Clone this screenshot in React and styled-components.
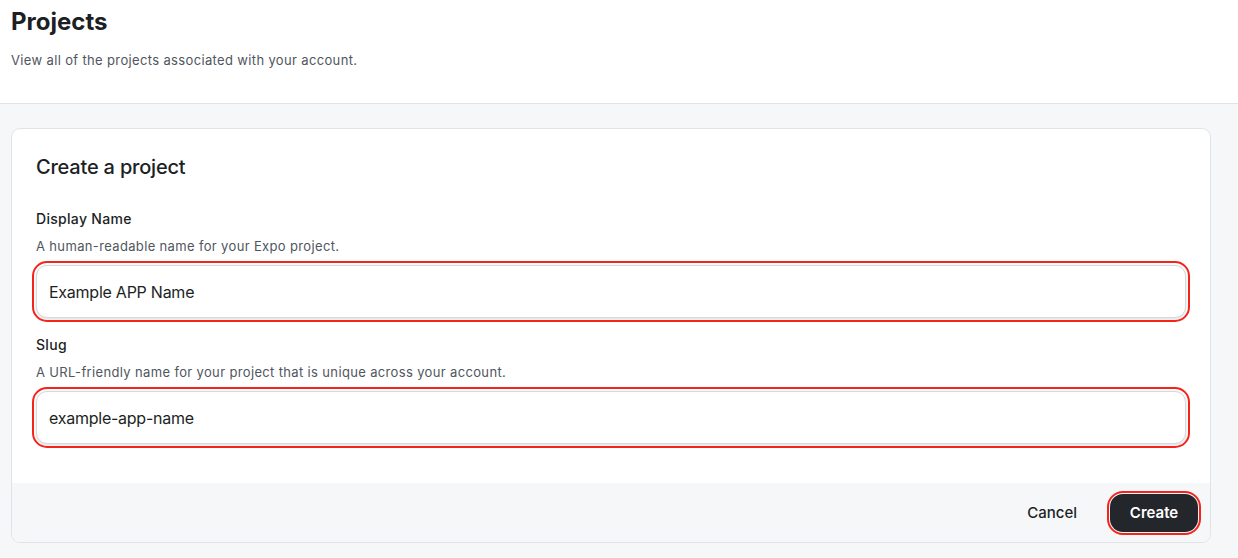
import styled, { createGlobalStyle } from 'styled-components';

const GlobalStyle = createGlobalStyle`
    html, body {
        margin: 0;
        padding: 0;
        background: #ffffff;
        font-family: Inter, "Noto Sans", "Liberation Sans", sans-serif;
        color: #1c1f24;
    }
    * {
        box-sizing: border-box;
    }
`;

const Page = styled.div`
    width: 1238px;
    height: 558px;
    display: flex;
    flex-direction: column;
    overflow: hidden;
`;

const Header = styled.header`
    background: #ffffff;
    padding: 7px 27px 0 11px;
    height: 104px;
    border-bottom: 1px solid #e1e3e8;
`;

const Title = styled.h1`
    margin: 0;
    font-size: 24px;
    line-height: 30px;
    font-weight: 700;
    color: #1c1f24;
`;

const Subtitle = styled.p`
    margin: 13px 0 0;
    font-size: 13px;
    line-height: 20px;
    letter-spacing: 0.35px;
    color: #4f5660;
`;

const Content = styled.main`
    flex: 1;
    background: #f6f7f9;
    padding: 24px 27px 0 11px;
`;

const Card = styled.section`
    background: #ffffff;
    border: 1px solid #e1e3e8;
    border-radius: 9px;
    overflow: hidden;
`;

const CardBody = styled.div`
    padding: 23px 24px 39px;
    display: flex;
    flex-direction: column;
`;

const CardTitle = styled.h2`
    margin: 0 0 27px;
    font-size: 20px;
    line-height: 30px;
    font-weight: 500;
    letter-spacing: -0.2px;
    color: #1c1f24;
`;

const Field = styled.div`
    display: flex;
    flex-direction: column;
    margin-bottom: ${p => (p.$last ? '0' : '17px')};
`;

const Label = styled.label`
    font-size: 14px;
    line-height: 20px;
    font-weight: 500;
    letter-spacing: 0.3px;
    color: #1c1f24;
`;

const Helper = styled.span`
    margin-top: 7px;
    font-size: 13px;
    line-height: 20px;
    letter-spacing: 0.35px;
    color: #4f5660;
`;

const Input = styled.input`
    margin-top: 9px;
    height: 53px;
    width: 100%;
    padding: 0 12px;
    border: 1px solid #d6d9de;
    border-radius: 11px;
    font-family: inherit;
    font-size: 16px;
    letter-spacing: -0.25px;
    color: #1c1f24;
    background: #ffffff;
    box-shadow: 0 1px 3px rgba(0, 0, 0, 0.14);
    outline: 2px solid #f5241b;
    outline-offset: 2px;
`;

const Footer = styled.div`
    background: #f6f7f9;
    height: 59px;
    display: flex;
    align-items: center;
    justify-content: flex-end;
    gap: 33px;
    padding: 0 12px 0 24px;
`;

const TextButton = styled.button`
    background: none;
    border: none;
    padding: 0;
    font-family: inherit;
    font-size: 15px;
    font-weight: 500;
    color: #1c1f24;
`;

const PrimaryButton = styled.button`
    height: 38px;
    width: 88px;
    border: none;
    border-radius: 13px;
    background: #23262b;
    color: #ffffff;
    font-family: inherit;
    font-size: 15px;
    font-weight: 600;
    outline: 2.5px solid #f5241b;
    outline-offset: 1px;
`;

const App = () => {
    return (
        <Page>
            <GlobalStyle />
            <Header>
                <Title>Projects</Title>
                <Subtitle>View all of the projects associated with your account.</Subtitle>
            </Header>
            <Content>
                <Card>
                    <CardBody>
                        <CardTitle>Create a project</CardTitle>
                        <Field>
                            <Label>Display Name</Label>
                            <Helper>A human-readable name for your Expo project.</Helper>
                            <Input defaultValue="Example APP Name" />
                        </Field>
                        <Field $last>
                            <Label>Slug</Label>
                            <Helper>A URL-friendly name for your project that is unique across your account.</Helper>
                            <Input defaultValue="example-app-name" />
                        </Field>
                    </CardBody>
                    <Footer>
                        <TextButton>Cancel</TextButton>
                        <PrimaryButton>Create</PrimaryButton>
                    </Footer>
                </Card>
            </Content>
        </Page>
    );
};

export default App;
